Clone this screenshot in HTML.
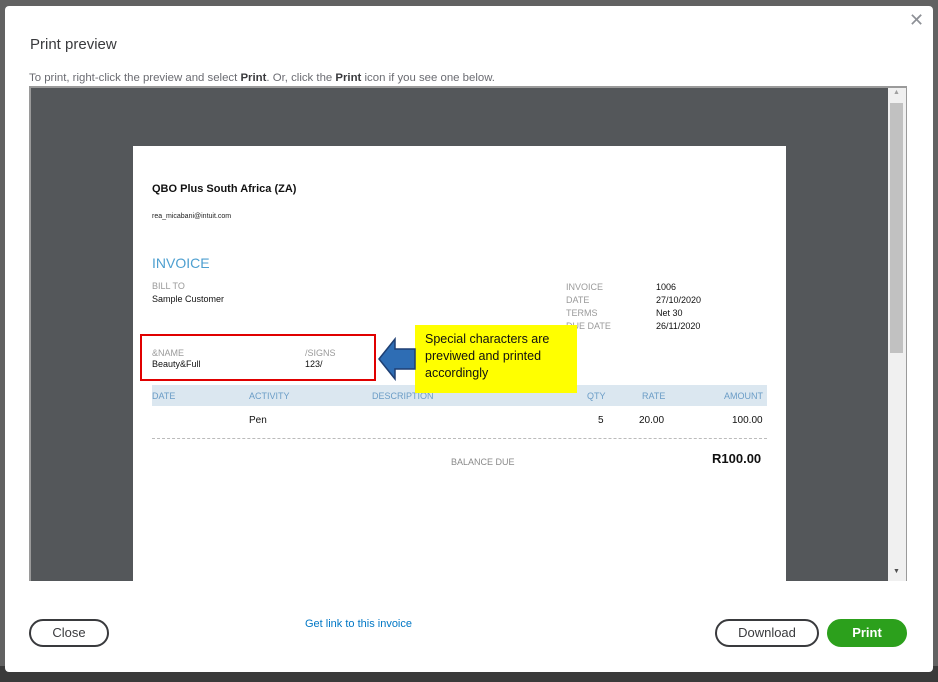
<!DOCTYPE html>
<html><head><meta charset="utf-8"><style>
*{margin:0;padding:0;box-sizing:border-box}
body{width:938px;height:682px;background:#626262;position:relative;overflow:hidden;font-family:"Liberation Sans",Arial,sans-serif}
.bot{position:absolute;left:0;top:666px;width:938px;height:16px;background:#3a3a3a}
.modal{position:absolute;left:5px;top:6px;width:928px;height:666px;background:#fff;border-radius:4px}
.abs{position:absolute}
.t{position:absolute;white-space:nowrap}
.lbl{color:#9a9a9a;font-size:9px}
.val{color:#111;font-size:9px}
.btn{position:absolute;height:28px;border:2px solid #393a3d;border-radius:15px;font-size:13px;color:#393a3d;text-align:center;line-height:24px;background:#fff}
</style></head><body>
<div class="bot"></div>
<div class="modal">
<div class="t" style="left:25px;top:30px;font-size:15px;color:#393a3d">Print preview</div>
<div class="t" style="left:904px;top:4px;font-size:18px;color:#8d9096">✕</div>
<div class="t" style="left:24px;top:66px;font-size:11.4px;color:#6b6c72">To print, right-click the preview and select <b style="color:#393a3d">Print</b>. Or, click the <b style="color:#393a3d">Print</b> icon if you see one below.</div>
<div class="abs" style="left:24px;top:80px;width:878px;height:495px;background:#54575a;border:2px solid #9a9a9a;border-bottom:none"></div>
<div class="abs" style="left:883px;top:82px;width:18px;height:493px;background:#f0f0f0"></div>
<div class="abs" style="left:885px;top:97px;width:13px;height:250px;background:#c1c1c1"></div>
<div class="t" style="left:888px;top:83px;font-size:7px;color:#a0a0a0">▲</div>
<div class="t" style="left:888px;top:562px;font-size:7px;color:#505050">▼</div>
<div class="abs" style="left:128px;top:140px;width:653px;height:435px;background:#fff"></div>
<div class="t" style="left:147px;top:177px;font-size:11px;font-weight:bold;color:#111">QBO Plus South Africa (ZA)</div>
<div class="t" style="left:147px;top:207px;font-size:7px;color:#222">rea_micabani@intuit.com</div>
<div class="t" style="left:147px;top:249px;font-size:14px;color:#4d9fd0">INVOICE</div>
<div class="t lbl" style="left:147px;top:275px">BILL TO</div>
<div class="t val" style="left:147px;top:288px">Sample Customer</div>
<div class="t lbl" style="left:561px;top:275px;line-height:13px">INVOICE<br>DATE<br>TERMS<br>DUE DATE</div>
<div class="t val" style="left:651px;top:275px;line-height:13px">1006<br>27/10/2020<br>Net 30<br>26/11/2020</div>
<div class="t lbl" style="left:147px;top:342px">&amp;NAME</div>
<div class="t val" style="left:147px;top:353px">Beauty&amp;Full</div>
<div class="t lbl" style="left:300px;top:342px">/SIGNS</div>
<div class="t val" style="left:300px;top:353px">123/</div>
<div class="abs" style="left:135px;top:328px;width:236px;height:47px;border:2px solid #e00000"></div>
<div class="abs" style="left:147px;top:379px;width:615px;height:21px;background:#dbe7f0"></div>
<div class="t" style="left:147px;top:385px;font-size:9px;color:#6a9cc6">DATE</div>
<div class="t" style="left:244px;top:385px;font-size:9px;color:#6a9cc6">ACTIVITY</div>
<div class="t" style="left:367px;top:385px;font-size:9px;color:#6a9cc6">DESCRIPTION</div>
<div class="t" style="left:582px;top:385px;font-size:9px;color:#6a9cc6">QTY</div>
<div class="t" style="left:637px;top:385px;font-size:9px;color:#6a9cc6">RATE</div>
<div class="t" style="left:719px;top:385px;font-size:9px;color:#6a9cc6">AMOUNT</div>
<div class="t" style="left:244px;top:409px;font-size:10px;color:#111">Pen</div>
<div class="t" style="left:593px;top:409px;font-size:10px;color:#111">5</div>
<div class="t" style="left:634px;top:409px;font-size:10px;color:#111">20.00</div>
<div class="t" style="left:727px;top:409px;font-size:10px;color:#111">100.00</div>
<div class="abs" style="left:147px;top:432px;width:615px;border-top:1px dashed #bbb"></div>
<div class="t" style="left:446px;top:451px;font-size:9px;color:#8a8a8a">BALANCE DUE</div>
<div class="t" style="left:707px;top:445px;font-size:13px;font-weight:bold;color:#111">R100.00</div>
<div class="abs" style="left:410px;top:319px;width:162px;height:68px;background:#ffff00"></div>
<div class="t" style="left:420px;top:325px;font-size:12.5px;line-height:17px;color:#111">Special characters are<br>previwed and printed<br>accordingly</div>
<svg class="abs" style="left:372px;top:331px" width="40" height="44" viewBox="0 0 40 44"><path d="M2 22 L18 2 L18 12 L38 12 L38 32 L18 32 L18 42 Z" fill="#2e6db4" stroke="#1e3f73" stroke-width="1.5"/></svg>
<div class="btn" style="left:24px;top:613px;width:80px">Close</div>
<div class="t" style="left:300px;top:612px;font-size:11px;color:#0077c5">Get link to this invoice</div>
<div class="btn" style="left:710px;top:613px;width:104px">Download</div>
<div class="btn" style="left:822px;top:613px;width:80px;background:#2ca01c;border-color:#2ca01c;color:#fff;font-weight:bold">Print</div>
</div>
</body></html>
